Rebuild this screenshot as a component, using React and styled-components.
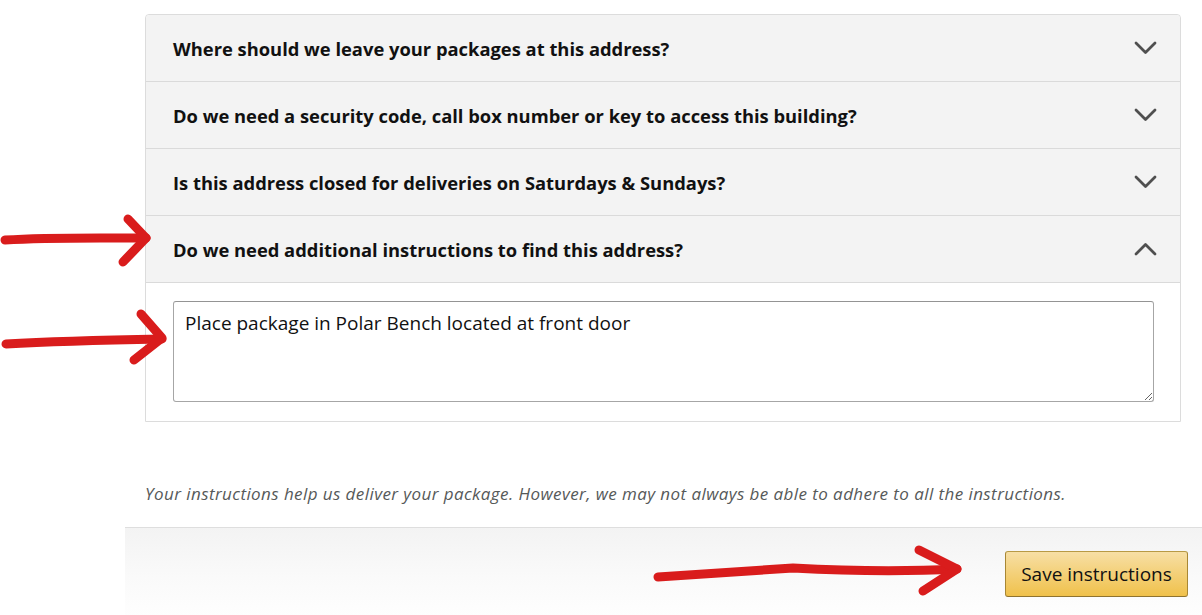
import React from "react";
import styled, { createGlobalStyle } from "styled-components";

const Global = createGlobalStyle`
  html, body { margin: 0; padding: 0; background: #fff; }
  body { font-family: "Open Sans", "Noto Sans", Arial, sans-serif; color: #111; }
  * { box-sizing: border-box; }
`;

const Page = styled.div`
  position: relative;
  width: 1202px;
  height: 615px;
  overflow: hidden;
  padding: 14px 21px 0 145px;
`;

const Panel = styled.div`
  border: 1px solid #dcdcdc;
  border-radius: 4px 4px 0 0;
  background: #fff;
`;

const Header = styled.div`
  height: 67px;
  display: flex;
  align-items: center;
  justify-content: space-between;
  padding: 0 23px 0 27px;
  background: #f3f3f3;
  border-bottom: 1px solid #dadada;
  font-size: 18.35px;
  font-weight: 700;
  color: #111;
  border-radius: ${(p) => (p.$first ? "4px 4px 0 0" : "0")};
`;

const Chevron = ({ up }) => (
  <svg width="24" height="16" viewBox="0 0 24 16" fill="none">
    <path
      d={up ? "M3 13 L12.5 3.5 L22 13" : "M3 3 L12.5 12.5 L22 3"}
      stroke="#4f4f4f"
      strokeWidth="2.8"
      strokeLinecap="round"
      strokeLinejoin="round"
    />
  </svg>
);

const Body = styled.div`
  padding: 18px 26px 19px 27px;
`;

const TextArea = styled.textarea`
  display: block;
  width: 100%;
  height: 101px;
  resize: vertical;
  border: 1px solid #a6a6a6;
  border-top-color: #949494;
  border-radius: 3px;
  padding: 8px 11px;
  font-family: "Open Sans", "Noto Sans", Arial, sans-serif;
  font-size: 19px;
  line-height: 26px;
  color: #111;
  outline: none;
  background: #fff;
`;

const Note = styled.p`
  margin: 60px 0 0;
  font-size: 17px;
  letter-spacing: 0.42px;
  font-style: italic;
  color: #565959;
  line-height: 23px;
`;

const Footer = styled.div`
  margin: 22px -21px 0 -20px;
  height: 100px;
  border-top: 1px solid #dedede;
  background: linear-gradient(to bottom, #f3f3f3 0%, #fafafa 50%, #fff 100%);
  display: flex;
  justify-content: flex-end;
  align-items: flex-start;
  padding: 23px 14px 0 0;
`;

const SaveButton = styled.button`
  height: 46px;
  width: 183px;
  border: 1px solid;
  border-color: #b89a45 #a88734 #8f7330;
  border-radius: 3px;
  background: linear-gradient(to bottom, #f7dfa5, #f0c14b);
  font-family: "Open Sans", "Noto Sans", Arial, sans-serif;
  font-size: 19px;
  color: #111;
  cursor: pointer;
  padding: 0;
`;

const Annotations = styled.svg`
  position: absolute;
  left: 0;
  top: 0;
  width: 1202px;
  height: 615px;
  pointer-events: none;
`;

const questions = [
  "Where should we leave your packages at this address?",
  "Do we need a security code, call box number or key to access this building?",
  "Is this address closed for deliveries on Saturdays & Sundays?",
  "Do we need additional instructions to find this address?",
];

export default function App() {
  return (
    <>
      <Global />
      <Page>
        <Panel>
          {questions.map((q, i) => (
            <Header key={i} $first={i === 0}>
              <span>{q}</span>
              <Chevron up={i === 3} />
            </Header>
          ))}
          <Body>
            <TextArea defaultValue="Place package in Polar Bench located at front door" />
          </Body>
        </Panel>
        <Note>
          Your instructions help us deliver your package. However, we may not always be able to adhere to all the instructions.
        </Note>
        <Footer>
          <SaveButton>Save instructions</SaveButton>
        </Footer>
        <Annotations viewBox="0 0 1202 615">
          <g stroke="#d91c1c" strokeWidth="9" fill="none" strokeLinecap="round" strokeLinejoin="round">
            <path d="M5 240 C 50 237, 100 238, 146 238" />
            <path d="M128 219 L146 238 L123 262" />
            <path d="M6 344 C 60 341, 110 340, 162 339" />
            <path d="M141 314 L162 338 L134 360" />
            <path d="M658 577 C 720 573, 760 570, 793 568 C 830 570, 900 572, 957 569" />
            <path d="M919 550 L957 569 L923 591" />
          </g>
        </Annotations>
      </Page>
    </>
  );
}
